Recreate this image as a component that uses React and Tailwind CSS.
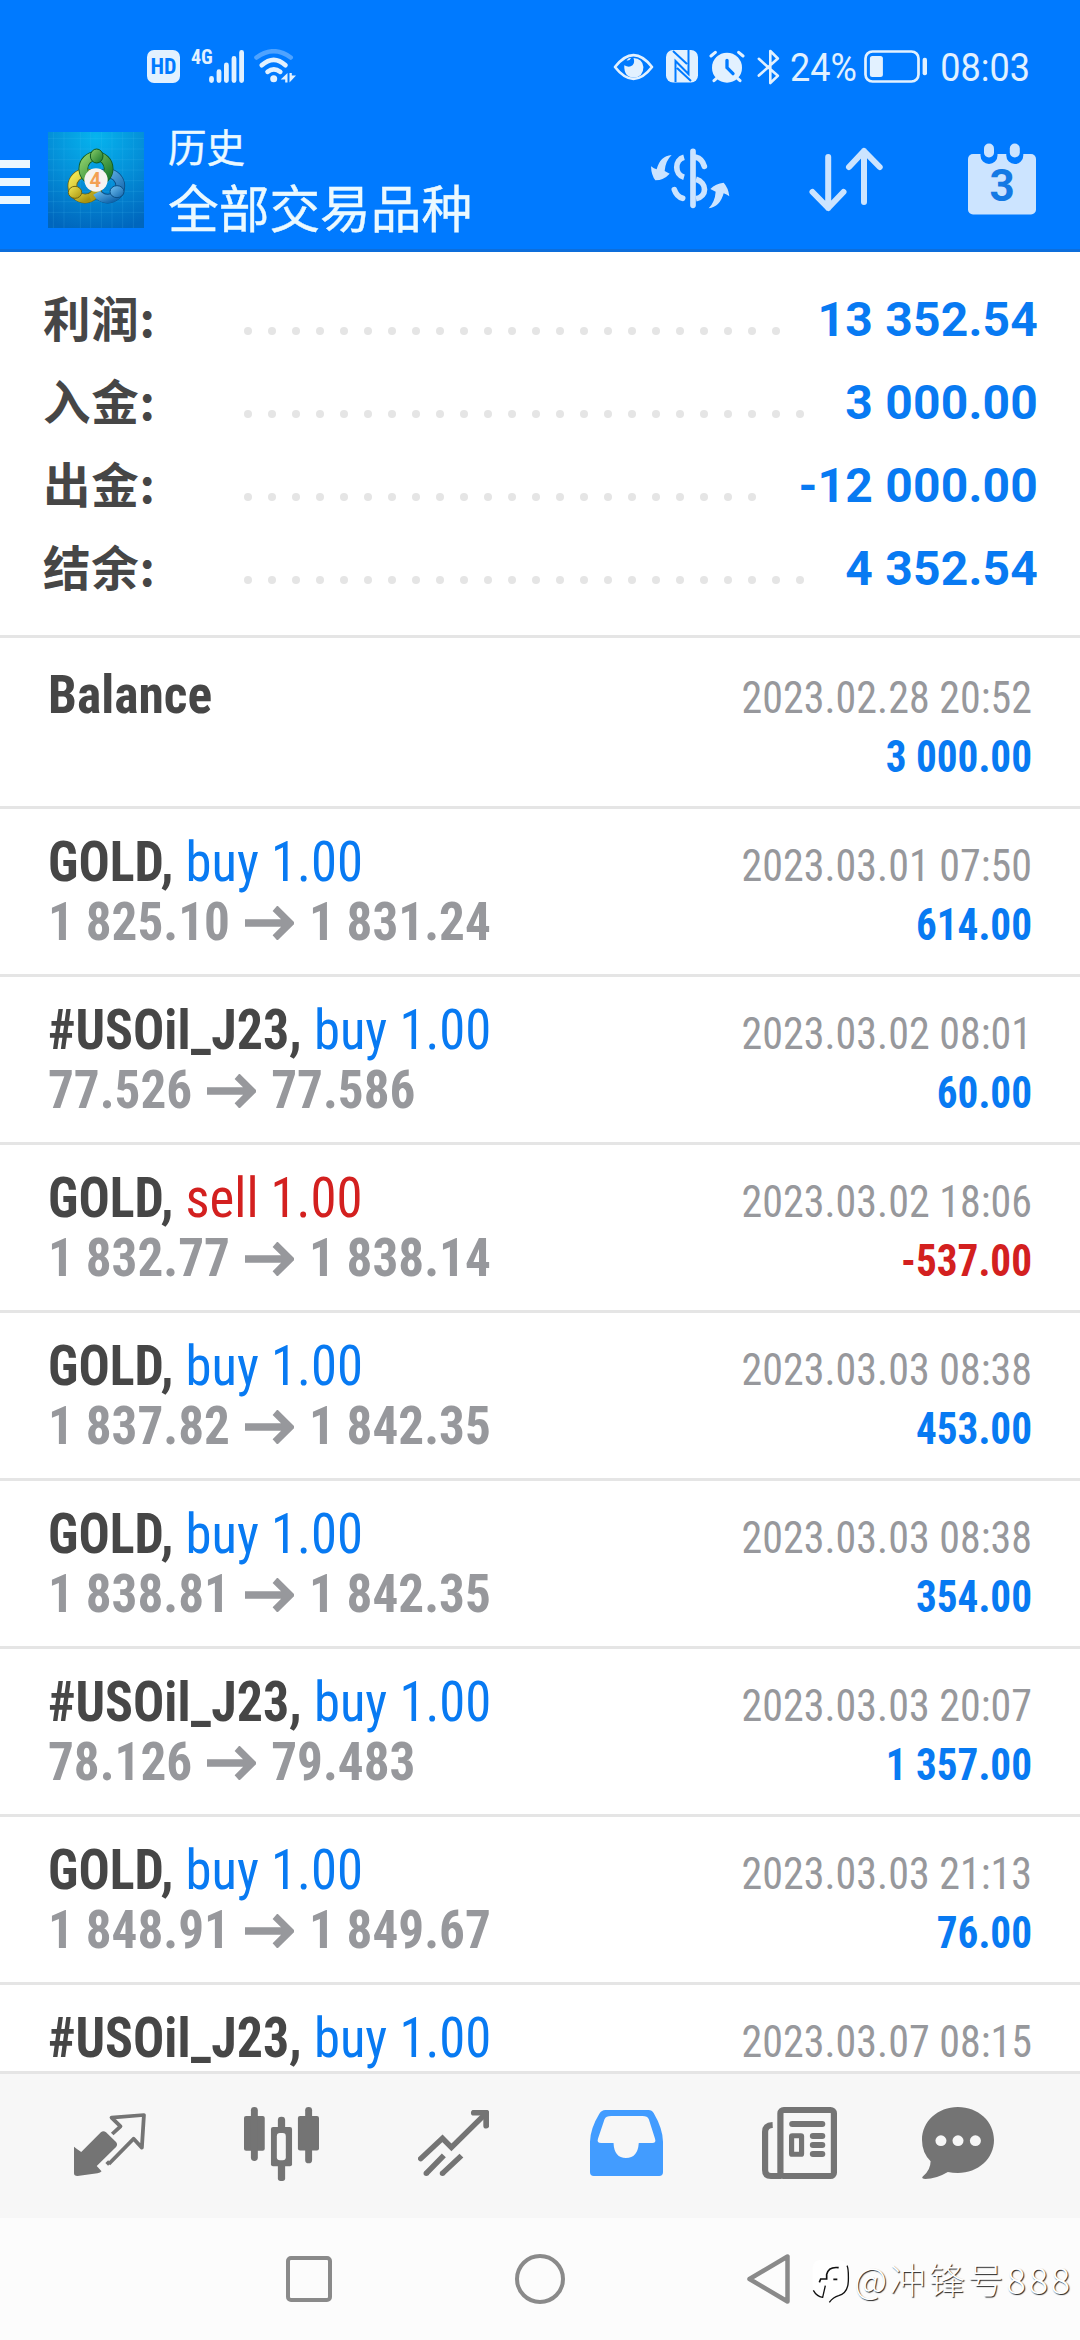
const summary = [
  { label: "利润:", value: "13 352.54", dots: 23 },
  { label: "入金:", value: "3 000.00", dots: 24 },
  { label: "出金:", value: "-12 000.00", dots: 22 },
  { label: "结余:", value: "4 352.54", dots: 24 },
];

const deals = [
  { symbol: "GOLD,", side: "buy 1.00", from: "1 825.10", to: "1 831.24", time: "2023.03.01 07:50", profit: "614.00" },
  { symbol: "#USOil_J23,", side: "buy 1.00", from: "77.526", to: "77.586", time: "2023.03.02 08:01", profit: "60.00" },
  { symbol: "GOLD,", side: "sell 1.00", from: "1 832.77", to: "1 838.14", time: "2023.03.02 18:06", profit: "-537.00" },
  { symbol: "GOLD,", side: "buy 1.00", from: "1 837.82", to: "1 842.35", time: "2023.03.03 08:38", profit: "453.00" },
  { symbol: "GOLD,", side: "buy 1.00", from: "1 838.81", to: "1 842.35", time: "2023.03.03 08:38", profit: "354.00" },
  { symbol: "#USOil_J23,", side: "buy 1.00", from: "78.126", to: "79.483", time: "2023.03.03 20:07", profit: "1 357.00" },
  { symbol: "GOLD,", side: "buy 1.00", from: "1 848.91", to: "1 849.67", time: "2023.03.03 21:13", profit: "76.00" },
  { symbol: "#USOil_J23,", side: "buy 1.00", time: "2023.03.07 08:15" },
];

function StatusBar() {
  return (
    <div className="flex h-[33px] mt-[50px] items-center pl-[147px] pr-[51px] text-[#e2f1ff]">
      <div className="w-[33px] h-[33px] shrink-0 rounded-[7px] bg-[#e2f1ff] flex items-center justify-center text-[#007aff] font-bold text-[22px] leading-none font-['Roboto_Condensed',sans-serif]">
        HD
      </div>
      <div className="ml-[11px] w-[18px] h-[33px] text-[20px] leading-[15px] font-bold font-['Roboto_Condensed',sans-serif]">4G</div>
      <svg className="w-[37px] h-[34px] shrink-0" viewBox="209 49 37 34" fill="none" stroke="currentColor" strokeWidth="4.8" strokeLinecap="round">
        <path d="M211.5 77.5v2M219 70.7v8.8M226.4 64v15.5M234 57.5v22M241.6 51.5v28" />
      </svg>
      <svg className="ml-[8px] w-[42px] h-[35px] shrink-0" viewBox="254 49 42 35" fill="none" stroke="currentColor" strokeWidth="4.6" strokeLinecap="round">
        <path opacity=".35" d="M256.500 57.500Q273.800 45 290.700 57.500" />
        <path d="M261.700 65.300Q273.800 54.500 285.500 65.300M267.500 71.800Q273.800 67 280.300 71.800" />
        <circle cx="273.700" cy="78.700" r="3.500" fill="currentColor" stroke="none" />
        <path fill="currentColor" stroke="none" d="M287.500 73v9.500h-2.300V79.600h-4.500zM289.500 82.500V73h2.300v2.500h4.200z" />
      </svg>
      <div className="flex-1" />
      <svg className="w-[41px] h-[30px] shrink-0" viewBox="35 36 124 88">
        <path d="M41 80Q97 8 153 80Q97 152 41 80Z" fill="none" stroke="currentColor" strokeWidth="8" strokeLinejoin="round" />
        <path fill="currentColor" d="M69 75Q68 112 98 112Q127 110 127 80Q124 54 97 53Q102 66 94 75Q84 84 69 75ZM76 60Q80 52 90 52Q86 62 76 60Z" />
      </svg>
      <svg className="ml-[12px] w-[32px] h-[33px] shrink-0" viewBox="0 0 32 33">
        <rect width="32" height="32.500" rx="7" fill="currentColor" />
        <path d="M9.500 32V11L22.500 24V0M7 1L21 14M25 31L11 18" fill="none" stroke="#007aff" strokeWidth="2" />
      </svg>
      <svg className="ml-[11px] w-[36px] h-[33px] shrink-0" viewBox="325 29 108 99" fill="none" stroke="currentColor" strokeWidth="9" strokeLinecap="round">
        <circle cx="379" cy="82" r="45" fill="currentColor" stroke="none" />
        <path d="M331 47L344 36M427 47L414 36M340 121L350 112M418 121L408 112" />
        <path d="M379 60V82L397 100" stroke="#007aff" strokeWidth="10" strokeLinejoin="round" />
      </svg>
      <svg className="ml-[12px] w-[23px] h-[36px] shrink-0" viewBox="466 24 69 110" fill="none" stroke="currentColor" strokeWidth="8" strokeLinecap="round" strokeLinejoin="round">
        <path d="M471 54L529 106L506 128V30L529 53L471 105" />
      </svg>
      <div className="ml-[10px] w-[71px] text-[36px] leading-[33px] scale-y-[1.06] font-['Roboto',sans-serif] relative top-[2px]">24%</div>
      <svg className="ml-[3px] w-[63px] h-[33px] shrink-0" viewBox="863 50 63 33">
        <rect x="864.500" y="51.500" width="53" height="30" rx="7" fill="none" stroke="currentColor" strokeWidth="2.700" />
        <rect x="868.900" y="56" width="13" height="21" rx="2.500" fill="currentColor" />
        <rect x="921.600" y="57.700" width="4.400" height="17.600" rx="2" fill="currentColor" />
      </svg>
      <div className="ml-[12px] w-[91px] -mr-px text-right text-[36px] leading-[33px] scale-y-[1.06] font-['Roboto',sans-serif] relative top-[2px]">08:03</div>
    </div>
  );
}

function AppLogo() {
  return (
    <svg className="w-[96px] h-[96px] shrink-0" viewBox="24 36 288 288">
      <defs>
        <radialGradient id="sky" cx=".5" cy=".05" r="1">
          <stop offset="0" stopColor="#06b4ee" />
          <stop offset=".5" stopColor="#048fd8" />
          <stop offset="1" stopColor="#0066bd" />
        </radialGradient>
        <linearGradient id="green" x1="0" y1="0" x2="1" y2="1">
          <stop offset="0" stopColor="#8ccf6a" />
          <stop offset="1" stopColor="#15752a" />
        </linearGradient>
        <linearGradient id="gold" x1="0" y1="0" x2="1" y2="1">
          <stop offset="0" stopColor="#f4ea55" />
          <stop offset="1" stopColor="#a89310" />
        </linearGradient>
        <linearGradient id="blue" x1="0" y1="0" x2="1" y2="1">
          <stop offset="0" stopColor="#75c4f4" />
          <stop offset="1" stopColor="#0e62aa" />
        </linearGradient>
      </defs>
      <rect x="24" y="36" width="288" height="288" fill="url(#sky)" />
      <path stroke="#5cc8f5" strokeOpacity=".22" strokeWidth="2" d="M40 36v288M72 36v288M121 36v288M152 36v288M184 36v288M216 36v288M248 36v288M280 36v288M24 55h288M24 87h288M24 119h288M24 150h288M24 182h288M24 214h288M24 245h288M24 277h288" />
      <g fill="none" strokeWidth="24">
        <circle cx="203" cy="198" r="38" stroke="#0b4f86" strokeWidth="29" />
        <circle cx="203" cy="198" r="38" stroke="url(#blue)" />
        <circle cx="135" cy="198" r="38" stroke="#6f6410" strokeWidth="29" />
        <circle cx="135" cy="198" r="38" stroke="url(#gold)" />
        <circle cx="168" cy="146" r="38" stroke="#0f5a22" strokeWidth="29" />
        <circle cx="168" cy="146" r="38" stroke="url(#green)" />
        <path d="M150 233A38 38 0 0 1 98 205" stroke="url(#gold)" />
        <path d="M170 218A38 38 0 0 0 240 208" stroke="url(#blue)" />
      </g>
      <ellipse cx="170" cy="108" rx="19" ry="21" fill="url(#green)" stroke="#0f5a22" strokeWidth="3" />
      <ellipse cx="105" cy="217" rx="20" ry="18" fill="url(#gold)" stroke="#6f6410" strokeWidth="3" />
      <ellipse cx="231" cy="215" rx="21" ry="18" fill="url(#blue)" stroke="#0b4f86" strokeWidth="3" />
      <circle cx="168" cy="180" r="35" fill="#f6f3f1" />
      <text x="166" y="201" textAnchor="middle" fontFamily="Roboto, sans-serif" fontWeight="700" fontSize="60" fill="#f3a052">4</text>
    </svg>
  );
}

function Header() {
  return (
    <div className="h-[252px] bg-[#007aff] border-b-[3px] border-[#0d6edb] overflow-hidden">
      <StatusBar />
      <div className="flex h-[166px] text-[#cce4ff]">
        <div className="mt-[77px] w-[30px] h-[44px] flex flex-col justify-between">
          <div className="h-[8px] bg-[#ebf7ff]" />
          <div className="h-[8px] bg-[#ebf7ff]" />
          <div className="h-[8px] bg-[#ebf7ff]" />
        </div>
        <div className="ml-[18px] mt-[49px]">
          <AppLogo />
        </div>
        <div className="ml-[24px] mt-[32px] w-[482px] text-[#ebf9ff] [-webkit-text-stroke:0.4px_#ebf9ff] font-['Noto_Sans_CJK_SC',sans-serif]">
          <div className="text-[38.500px] leading-[60px]">历史</div>
          <div className="text-[50.700px] leading-[62px]">全部交易品种</div>
        </div>
        <svg className="mt-[63px] w-[80px] h-[64px] shrink-0" viewBox="60 48 240 192" fill="none" stroke="currentColor" strokeWidth="17">
          <path d="M162 82C133 90 133 134 162 142" />
          <path d="M189 64V226M198 82Q216 86 223 109M133 179Q140 200 158 205" strokeLinecap="round" />
          <path d="M198 148C232 158 232 199 198 206" />
          <path fill="currentColor" stroke="none" d="M125 75Q90 78 80 118Q72 116 63 109Q64 136 76 151Q102 150 119 131L104 123Q106 93 125 75ZM236 235Q270 231 281 190Q290 193 298 199Q295 173 281 158Q257 160 241 177L257 185Q255 215 236 235Z" />
        </svg>
        <svg className="ml-[77px] mt-[63px] w-[78px] h-[68px] shrink-0" viewBox="807 146 78 68" fill="none" stroke="currentColor" strokeWidth="6" strokeLinecap="round" strokeLinejoin="round">
          <path d="M828.200 157V208M812.500 192L828.200 208L843.500 192M864 202V151M849 167L864 151L879.700 167" />
        </svg>
        <div className="ml-[83px] mt-[60px] relative w-[68px] h-[72px]">
          <svg className="w-[68px] h-[72px]" viewBox="968 143 68 72">
            <rect x="968" y="154" width="68" height="60.500" rx="5" fill="currentColor" />
            <path d="M989 152v3.500M1014.800 152v3.500" stroke="#007aff" strokeWidth="17" strokeLinecap="round" />
            <rect x="984" y="143.500" width="10" height="14" rx="5" fill="currentColor" />
            <rect x="1009.800" y="143.500" width="10" height="14" rx="5" fill="currentColor" />
          </svg>
          <div className="absolute inset-x-0 top-[17px] text-center text-[44px] leading-[52px] font-bold text-[#1479e4] font-['Roboto',sans-serif]">3</div>
        </div>
      </div>
    </div>
  );
}

function Summary() {
  return (
    <div className="h-[386px] pt-[26px] pl-[43px] pr-[42px] border-b-[3px] border-[#e5e5e5]">
      {summary.map((row) => (
        <div key={row.label} className="flex h-[83px] items-center">
          <div className="w-[201px] shrink-0 pb-[6px] text-[47.500px] leading-[77px] tracking-[0.700px] font-bold text-[#464646] whitespace-nowrap font-['Noto_Sans_CJK_SC',sans-serif]">
            {row.label}
          </div>
          <div className="flex gap-[16px] pt-[23px]">
            {Array.from({ length: row.dots }, (_, i) => (
              <div key={i} className="w-[8px] h-[8px] rounded-full bg-[#e5e5e5]" />
            ))}
          </div>
          <div className="flex-1 text-right whitespace-nowrap text-[48px] leading-[83px] font-bold text-[#087af2] tracking-[0.2px] font-['Roboto',sans-serif]">
            {row.value}
          </div>
        </div>
      ))}
    </div>
  );
}

function Arrow() {
  return (
    <svg className="inline-block w-[49px] h-[32px] mx-[15px] align-baseline" viewBox="0 0 49 32" fill="none" stroke="currentColor" strokeWidth="7">
      <path d="M0 16H44M30 2L45 16L30 30" />
    </svg>
  );
}

/* One baseline-aligned text line; glyphs are slightly taller than the condensed face draws them. */
function Line({ children }) {
  return (
    <div className="flex h-[59px] leading-[59px] justify-between items-baseline whitespace-nowrap scale-y-[1.06] origin-[0_47px]">
      {children}
    </div>
  );
}

function Deal({ deal }) {
  const short = deal.side.startsWith("sell");
  return (
    <div className="h-[168px] pt-[25px] px-[48px] border-b-[3px] border-[#e5e5e5]">
      <Line>
        <div className="text-[52.700px]">
          <span className="text-[51.900px] font-bold text-[#464646]">{deal.symbol}</span>{" "}
          <span className={short ? "text-[#d3201f]" : "text-[#087af2]"}>{deal.side}</span>
        </div>
        <div className="text-[42px] text-[#97989c]">{deal.time}</div>
      </Line>
      {deal.profit && (
        <Line>
          <div className="text-[51.200px] font-bold text-[#97989c]">
            {deal.from}
            <Arrow />
            {deal.to}
          </div>
          <div className={deal.profit.startsWith("-") ? "text-[41.200px] font-bold text-[#d3201f]" : "text-[41.200px] font-bold text-[#087af2]"}>
            {deal.profit}
          </div>
        </Line>
      )}
    </div>
  );
}

function History() {
  return (
    <div className="h-[1433px] overflow-hidden font-['Roboto_Condensed',sans-serif]">
      <div className="h-[171px] pt-[28px] px-[48px] border-b-[3px] border-[#e5e5e5]">
        <Line>
          <div className="text-[51.500px] font-bold text-[#464646]">Balance</div>
          <div className="text-[42px] text-[#97989c]">2023.02.28 20:52</div>
        </Line>
        <Line>
          <div className="text-[51.200px]">&nbsp;</div>
          <div className="text-[41.200px] font-bold text-[#087af2]">3 000.00</div>
        </Line>
      </div>
      {deals.map((deal, i) => (
        <Deal key={i} deal={deal} />
      ))}
    </div>
  );
}

function TabBar() {
  return (
    <div className="h-[147px] border-t-[3px] border-[#e5e5e5] bg-[#f7f7f7] flex pl-[74px] text-[#747474]">
      <svg className="mt-[39px] w-[72px] h-[63px] shrink-0" preserveAspectRatio="none" viewBox="215 189 209 189">
        <path fill="currentColor" d="M215 290Q222 296 236 306L293 247Q300 240 308 247L337 276Q343 284 337 291L281 348L295 364Q292 368 283 370L225 378Q215 378 215 370Z" />
        <path d="M326 252L350 229L324 203L418 195L412 293L388 266L316 342" fill="none" stroke="currentColor" strokeWidth="11" strokeLinejoin="round" />
        <path d="M310 343L318 335" stroke="currentColor" strokeWidth="11" />
      </svg>
      <svg className="ml-[98px] mt-[33px] w-[75px] h-[74px] shrink-0" preserveAspectRatio="none" viewBox="709 171 217 221">
        <g fill="currentColor">
          <rect x="709" y="198" width="60" height="104" rx="6" />
          <rect x="729" y="171" width="20" height="161" rx="10" />
          <rect x="865" y="198" width="61" height="103" rx="6" />
          <rect x="886" y="171" width="20" height="168" rx="10" />
          <rect x="807" y="200" width="21" height="50" rx="10" />
          <rect x="807" y="335" width="21" height="57" rx="8" />
          <rect x="787" y="231" width="61" height="117" rx="6" />
        </g>
        <rect x="804" y="249" width="26" height="81" rx="9" fill="#f7f7f7" />
      </svg>
      <svg className="ml-[99px] mt-[36px] w-[71px] h-[66px] shrink-0" preserveAspectRatio="none" viewBox="1214 180 206 198" fill="none" stroke="currentColor" strokeWidth="16">
        <path d="M1222 326L1285 265L1311 292L1411 190" strokeLinecap="round" />
        <path d="M1376 188H1412V227" strokeWidth="17" strokeLinecap="round" strokeLinejoin="round" />
        <path d="M1238 370L1289 316M1285 370L1340 317" />
        <path d="M1238 370h.1M1285 370h.1" strokeLinecap="round" />
      </svg>
      <svg className="ml-[101px] mt-[36px] w-[73px] h-[66px] shrink-0" preserveAspectRatio="none" viewBox="146 180 211 198">
        <path fill="#429cff" fillRule="evenodd" d="M190 180H315Q325 180 330 189Q356 235 357 275V367Q357 378 346 378H157Q146 378 146 367V275Q147 235 173 191Q180 180 190 180ZM207 198Q192 198 188 208L169 266Q165 279 178 279H214Q216 324 250 324Q284 324 287 279H326Q338 279 334 266L316 208Q312 198 298 198Z" />
      </svg>
      <svg className="ml-[99px] mt-[33px] w-[75px] h-[72px] shrink-0" preserveAspectRatio="none" viewBox="646 171 218 216" fill="none" stroke="currentColor" strokeWidth="18">
        <rect x="699.500" y="180" width="155.500" height="198" rx="10" />
        <path d="M677 225Q655 226 655 245V360Q655 378 672 378H702" />
        <path d="M734 222H821M794 258H821M794 285H821M794 312H821" strokeLinecap="round" />
        <rect x="732" y="257" width="29" height="56" rx="2" strokeWidth="15" />
      </svg>
      <svg className="ml-[85px] mt-[33px] w-[72px] h-[72px] shrink-0" preserveAspectRatio="none" viewBox="1109 171 209 216">
        <path fill="currentColor" d="M1213 171C1272 171 1318 214 1318 270C1318 326 1272 369 1213 369Q1198 369 1184 366Q1150 387 1118 387Q1105 387 1112 379Q1134 360 1134 334Q1109 308 1109 270C1109 214 1155 171 1213 171Z" />
        <g fill="#f7f7f7">
          <circle cx="1164" cy="272" r="16" />
          <circle cx="1213.500" cy="272" r="16" />
          <circle cx="1264" cy="272" r="16" />
        </g>
      </svg>
    </div>
  );
}

function SystemNav() {
  return (
    <div className="relative h-[122px] bg-[#fcfcfc] flex items-center pl-[286px]">
      <div className="w-[46px] h-[46px] rounded-[5px] border-[4.500px] border-[#8a8a8a]" />
      <div className="ml-[183px] w-[50px] h-[50px] rounded-full border-[4.500px] border-[#8a8a8a]" />
      <svg className="ml-[182px] w-[43px] h-[51px]" viewBox="747 2254 43 51" fill="none" stroke="#8a8a8a" strokeWidth="4.500" strokeLinejoin="round">
        <path d="M749.500 2279L787.500 2256.500V2301.500Z" />
      </svg>
      <div className="absolute right-[7px] top-[33px] flex items-center text-white">
        <svg className="w-[38px] h-[46px] mr-[4px] mt-[8px]" viewBox="28 58 114 138">
          <path fill="#fff" d="M48 62H112Q136 64 136 92V124Q136 160 106 168Q94 170 82 182L78 172H62Q32 170 30 136V84Q32 64 48 62Z" />
          <path fill="none" stroke="#111" strokeWidth="4" d="M133 78Q138 86 137 124Q136 160 108 168Q92 172 80 188M32 152Q42 170 60 173L68 138" />
          <path fill="none" stroke="#111" strokeWidth="5" d="M108 84Q78 80 72 104V118H54L50 128M92 119H104" />
        </svg>
        <span className="text-[36px] leading-[44px] font-light whitespace-nowrap tracking-[2.900px] [text-shadow:1px_1px_1px_#222] font-['Noto_Sans_CJK_SC',sans-serif]">@冲锋号888</span>
      </div>
    </div>
  );
}

export default function App() {
  return (
    <div className="w-[1080px] h-[2340px] bg-white overflow-hidden flex flex-col">
      <Header />
      <Summary />
      <History />
      <TabBar />
      <SystemNav />
    </div>
  );
}
